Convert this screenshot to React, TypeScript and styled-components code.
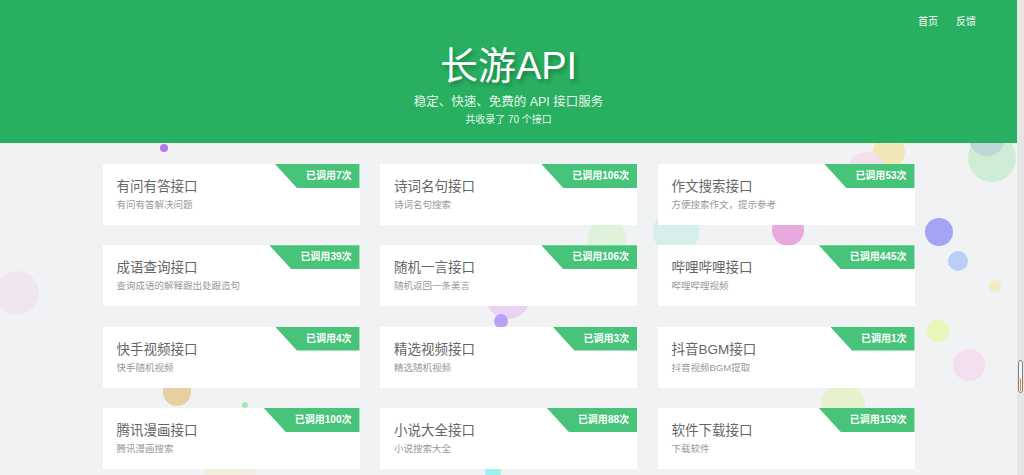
import styled, { createGlobalStyle } from "styled-components";

const GlobalStyle = createGlobalStyle`
  html, body {
    margin: 0;
    padding: 0;
    overflow: hidden;
    background: #f1f2f4;
  }
  body {
    font-family: "Liberation Sans", "Noto Sans CJK SC", sans-serif;
  }
`;

const apis = [
  { title: "有问有答接口", desc: "有问有答解决问题", calls: 7 },
  { title: "诗词名句接口", desc: "诗词名句搜索", calls: 106 },
  { title: "作文搜索接口", desc: "方便搜索作文，提示参考", calls: 53 },
  { title: "成语查询接口", desc: "查询成语的解释跟出处跟造句", calls: 39 },
  { title: "随机一言接口", desc: "随机返回一条美言", calls: 106 },
  { title: "哔哩哔哩接口", desc: "哔哩哔哩视频", calls: 445 },
  { title: "快手视频接口", desc: "快手随机视频", calls: 4 },
  { title: "精选视频接口", desc: "精选随机视频", calls: 3 },
  { title: "抖音BGM接口", desc: "抖音视频BGM提取", calls: 1 },
  { title: "腾讯漫画接口", desc: "腾讯漫画搜索", calls: 100 },
  { title: "小说大全接口", desc: "小说搜索大全", calls: 88 },
  { title: "软件下载接口", desc: "下载软件", calls: 159 },
];

// decorative bubbles floating on the page background
const bubbles = [
  { x: 164, y: 148, r: 4, c: "#b57ae8" },
  { x: 17, y: 293, r: 22, c: "#efe6ef" },
  { x: 177, y: 392, r: 14, c: "#e6d0a2" },
  { x: 245, y: 405, r: 3, c: "#a3e8b3" },
  { x: 230, y: 478, r: 26, c: "#f3ede0" },
  { x: 889, y: 152, r: 16, c: "#f1e6b6" },
  { x: 867, y: 172, r: 20, c: "#f2e0ea" },
  { x: 992, y: 158, r: 24, c: "#cfecd5" },
  { x: 987, y: 138, r: 18, c: "#bed7d6" },
  { x: 939, y: 232, r: 14, c: "#a4a4f5" },
  { x: 958, y: 261, r: 10, c: "#b9cff5" },
  { x: 995, y: 286, r: 6, c: "#f3ebc2" },
  { x: 938, y: 331, r: 11, c: "#e7f7b9" },
  { x: 969, y: 365, r: 16, c: "#f3dff0" },
  { x: 788, y: 230, r: 16, c: "#e8aadc" },
  { x: 676, y: 232, r: 23, c: "#d6efec" },
  { x: 607, y: 240, r: 20, c: "#dff3da" },
  { x: 508, y: 297, r: 22, c: "#ebd1f3" },
  { x: 501, y: 321, r: 7, c: "#b9a2f5" },
  { x: 493, y: 472, r: 8, c: "#a0f0f0" },
  { x: 843, y: 405, r: 22, c: "#e5f2cd" },
];

export default function App() {
  return (
    <>
      <GlobalStyle />
      <Screen>
        <Page>
          <BubbleLayer>
            {bubbles.map((b, i) => (
              <Bubble
                key={i}
                style={{
                  left: b.x - b.r,
                  top: b.y - b.r,
                  width: b.r * 2,
                  height: b.r * 2,
                  background: b.c,
                }}
              />
            ))}
          </BubbleLayer>
          <Header>
            <Nav>
              <NavLink href="#">首页</NavLink>
              <NavLink href="#">反馈</NavLink>
            </Nav>
            <Title>长游API</Title>
            <Subtitle>稳定、快速、免费的 API 接口服务</Subtitle>
            <Count>共收录了 70 个接口</Count>
          </Header>
          <Grid>
            {apis.map((a) => (
              <Card key={a.title}>
                <Badge>已调用{a.calls}次</Badge>
                <CardTitle>{a.title}</CardTitle>
                <CardDesc>{a.desc}</CardDesc>
              </Card>
            ))}
          </Grid>
        </Page>
        <ScrollTrack>
          <ScrollThumb>
            <ScrollFill />
          </ScrollThumb>
        </ScrollTrack>
      </Screen>
    </>
  );
}

const Screen = styled.div`
  display: flex;
  width: 1024px;
  height: 475px;
`;

const Page = styled.main`
  position: relative;
  flex: 1;
  overflow: hidden;
  background: #f1f2f4;
`;

const BubbleLayer = styled.div`
  position: absolute;
  inset: 0;
  z-index: 0;
`;

const Bubble = styled.span`
  position: absolute;
  border-radius: 50%;
`;

const Header = styled.header`
  position: relative;
  z-index: 1;
  height: 143px;
  box-sizing: border-box;
  padding-top: 14px;
  background: #28af60;
  color: #fff;
  display: flex;
  flex-direction: column;
  align-items: center;
`;

const Nav = styled.nav`
  align-self: stretch;
  display: flex;
  justify-content: flex-end;
  gap: 18px;
  padding-right: 41px;
  height: 16px;
  line-height: 16px;
`;

const NavLink = styled.a`
  color: #fff;
  font-size: 10px;
  text-decoration: none;
`;

const Title = styled.h1`
  margin: 13px 0 0;
  font-size: 38px;
  line-height: 46px;
  font-weight: normal;
  text-shadow: 2px 3px 4px rgba(0, 0, 0, 0.28);
`;

const Subtitle = styled.p`
  margin: 5px 0 0;
  font-size: 12.5px;
  line-height: 16px;
  color: rgba(255, 255, 255, 0.92);
`;

const Count = styled.p`
  margin: 3px 0 0;
  font-size: 10px;
  line-height: 14px;
  color: rgba(255, 255, 255, 0.92);
`;

const Grid = styled.section`
  position: relative;
  z-index: 1;
  width: 812px;
  margin: 21px auto 0;
  display: grid;
  grid-template-columns: repeat(3, 1fr);
  column-gap: 20.5px;
  row-gap: 20.3px;
`;

const Card = styled.article`
  position: relative;
  height: 61px;
  box-sizing: border-box;
  padding: 14px 14px 0;
  background: #fff;
`;

const Badge = styled.span`
  position: absolute;
  top: 0;
  right: 0;
  height: 24px;
  line-height: 24px;
  padding: 0 8px 0 31px;
  background: #47c479;
  color: #fff;
  font-size: 10px;
  font-weight: bold;
  clip-path: polygon(0 0, 100% 0, 100% 100%, 22px 100%);
`;

const CardTitle = styled.h3`
  margin: 0;
  font-size: 13.5px;
  line-height: 17px;
  font-weight: normal;
  color: #666;
`;

const CardDesc = styled.p`
  margin: 3px 0 0;
  font-size: 9.5px;
  line-height: 13px;
  color: #999;
`;

const ScrollTrack = styled.div`
  width: 7px;
  height: 475px;
  background: #e6e6e6;
  position: relative;
`;

const ScrollThumb = styled.div`
  position: absolute;
  left: 1px;
  top: 360px;
  width: 5px;
  height: 33px;
  box-sizing: border-box;
  border: 1px solid #808080;
  border-radius: 3px;
  background: #f4f4f4;
  display: flex;
  align-items: flex-end;
  justify-content: center;
  padding: 1px;
`;

const ScrollFill = styled.div`
  width: 100%;
  height: 13px;
  background: #f0802c;
  border-radius: 1px;
`;
